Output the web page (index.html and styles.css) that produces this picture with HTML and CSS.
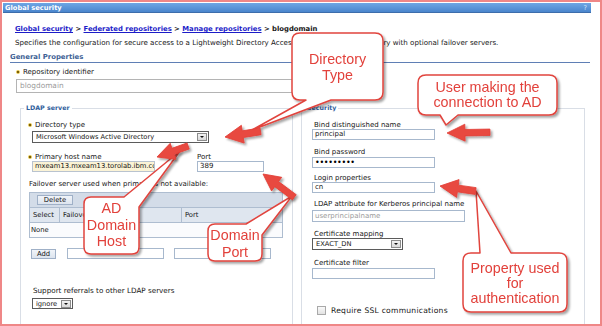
FILE: index.html
```html
<!DOCTYPE html>
<html>
<head>
<meta charset="utf-8">
<link rel="stylesheet" href="styles.css">
</head>
<body>
<div class="frame">
  <div class="titlebar"><span>Global security</span><span class="help">?</span></div>
  <div class="page">
    <div class="crumbs"><a>Global security</a> &gt; <a>Federated repositories</a> &gt; <a>Manage repositories</a> &gt; <b>blogdomain</b></div>
    <p class="desc">Specifies the configuration for secure access to a Lightweight Directory Access Protocol (LDAP) repository with optional failover servers.</p>
    <h2 class="section">General Properties</h2>
    <div class="repo">
      <div class="lbl req">Repository identifier</div>
      <div class="in repo-in grey">blogdomain</div>
    </div>
    <div class="groups">
      <fieldset class="group ldap">
        <legend>LDAP server</legend>
        <div class="lbl req dir-lbl">Directory type</div>
        <div class="sel dir-sel"><span>Microsoft Windows Active Directory</span><span class="dd"></span></div>
        <div class="host-row">
          <div class="host-col">
            <div class="lbl req">Primary host name</div>
            <div class="in host-in">mxeam13.mxeam13.torolab.ibm.com</div>
          </div>
          <div class="port-col">
            <div class="lbl">Port</div>
            <div class="in port-in">389</div>
          </div>
        </div>
        <div class="lbl plain fail-lbl">Failover server used when primary is not available:</div>
        <div class="table">
          <div class="toolbar"><span class="btn del-btn">Delete</span></div>
          <div class="trow thead"><span class="c1">Select</span><span class="c2">Failover host</span><span class="c3">Port</span></div>
          <div class="trow tbody"><span class="c-all">None</span></div>
        </div>
        <div class="add-row">
          <span class="btn add-btn">Add</span>
          <span class="in add-host"></span>
          <span class="in add-port"></span>
        </div>
        <div class="lbl plain ref-lbl">Support referrals to other LDAP servers</div>
        <div class="sel ref-sel"><span>ignore</span><span class="dd"></span></div>
      </fieldset>
      <fieldset class="group security">
        <legend>Security</legend>
        <div class="lbl sec-lbl m9">Bind distinguished name</div>
        <div class="in sec-in">principal</div>
        <div class="lbl sec-lbl m8">Bind password</div>
        <div class="in sec-in pw g1">•••••••••</div>
        <div class="lbl sec-lbl m6">Login properties</div>
        <div class="in sec-in">cn</div>
        <div class="lbl sec-lbl m7">LDAP attribute for Kerberos principal name</div>
        <div class="in krb-in grey g2">userprincipalname</div>
        <div class="lbl sec-lbl m8">Certificate mapping</div>
        <div class="sel cert-sel"><span>EXACT_DN</span><span class="dd"></span></div>
        <div class="lbl sec-lbl m9">Certificate filter</div>
        <div class="in sec-in g1"></div>
        <div class="ssl-row"><span class="chk"></span><span>Require SSL communications</span></div>
      </fieldset>
    </div>
  </div>

  <svg class="overlay" width="602" height="326" viewBox="0 0 602 326">
    <defs>
      <filter id="sh" x="-30%" y="-30%" width="160%" height="160%">
        <feDropShadow dx="2" dy="2" stdDeviation="1.3" flood-color="#000" flood-opacity="0.35"/>
      </filter>
    </defs>
    <g class="callouts" filter="url(#sh)">
      <path d="M300,33 H375 Q383,33 383,41 V92 Q383,100 375,100 H331 L252,130 L306,100 H300 Q292,100 292,92 V41 Q292,33 300,33 Z"/>
      <path d="M426,75 H549 Q557,75 557,83 V107 Q557,115 549,115 H458 L446,125 L440,115 H426 Q418,115 418,107 V83 Q418,75 426,75 Z"/>
      <path d="M91,197 H124 L180,151 L139,207 V247 Q139,254 132,254 H91 Q84,254 84,247 V204 Q84,197 91,197 Z"/>
      <path d="M215,224 H246 L292,196 L262,235 V254 Q262,261 255,261 H215 Q208,261 208,254 V231 Q208,224 215,224 Z"/>
      <path d="M471,253 H480 L476,191 L511,253 H559 Q567,253 567,261 V304 Q567,312 559,312 H471 Q463,312 463,304 V261 Q463,253 471,253 Z"/>
    </g>
    <g class="arrows" filter="url(#sh)">
      <polygon transform="translate(225,137) rotate(-9)" points="0,0 18,-9 18,-3.4 36,-3.4 36,3.4 18,3.4 18,9"/>
      <polygon transform="translate(447,133) rotate(-1)" points="0,0 18,-8.5 18,-3.2 43,-3.2 43,3.2 18,3.2 18,8.5"/>
      <polygon transform="translate(157,157) rotate(-19.5)" points="0,0 17,-8.5 17,-3.2 33,-3.2 33,3.2 17,3.2 17,8.5"/>
      <polygon transform="translate(263,174) rotate(36.6)" points="0,0 17,-8.5 17,-3.2 39,-3.2 39,3.2 17,3.2 17,8.5"/>
      <polygon transform="translate(440,186) rotate(8)" points="0,0 18,-9 18,-3.4 36,-3.4 36,3.4 18,3.4 18,9"/>
    </g>
    <g class="ctext">
      <text x="337.5" y="64">Directory</text>
      <text x="337.5" y="80">Type</text>
      <text x="487.5" y="91.5">User making the</text>
      <text x="487.5" y="106.5">connection to AD</text>
      <text x="111.5" y="213">AD</text>
      <text x="111.5" y="230">Domain</text>
      <text x="111.5" y="246">Host</text>
      <text x="235" y="240">Domain</text>
      <text x="235" y="257">Port</text>
      <text x="515" y="273">Property used</text>
      <text x="515" y="288">for</text>
      <text x="515" y="303">authentication</text>
    </g>
  </svg>
</div>
</body>
</html>
```

FILE: styles.css
```css
* { box-sizing: border-box; }
body { margin: 0; font-family: "DejaVu Sans", Verdana, sans-serif; }

.frame {
  position: relative;
  width: 602px;
  height: 326px;
  border: 2px solid #ef8787;
  background: #fff;
  overflow: hidden;
  font-size: 7px;
  color: #151515;
}

.titlebar {
  height: 10px;
  margin: 1px 9px 0 1px;
  padding: 0 4px 0 2px;
  background: linear-gradient(#6ea6e4, #4a85cd);
  border-bottom: 1px solid #3c6dab;
  display: flex;
  justify-content: space-between;
  align-items: center;
  color: #fff;
  font-weight: bold;
  font-size: 6.7px;
}
.help { color: #d6e6f8; font-size: 6.5px; font-weight: normal; }

.page { padding: 0 10px 0 9px; }

.crumbs {
  margin: 11px 0 0 4px;
  line-height: 10px;
  font-weight: bold;
  font-size: 6.85px;
  white-space: nowrap;
}
.crumbs a { color: #1c1cc8; text-decoration: underline; }

.desc { margin: 4px 0 0 4px; line-height: 10px; white-space: nowrap; font-size: 7.1px; }

.section {
  margin: 4px 0 0 -1px;
  line-height: 10px;
  font-size: 6.9px;
  font-weight: bold;
  color: #3d5f94;
  border-bottom: 1px solid #5f7fb5;
}

.lbl { line-height: 8px; white-space: nowrap; }
.req::before {
  content: "";
  display: inline-block;
  width: 4px;
  height: 4px;
  margin: 0 3px 0 0;
  border-radius: 50%;
  background: radial-gradient(circle, #7a5e08 0 25%, #e0be3e 45%, #f3e08a 100%);
  vertical-align: 0px;
}

.in {
  height: 11px;
  border: 1px solid #a7b8cd;
  background: #fff;
  padding: 0 2px;
  line-height: 9px;
  white-space: nowrap;
  overflow: hidden;
  font-size: 7px;
}
.grey { color: #9a9a9a; }

.repo { margin: 5px 0 0 5px; }
.repo-in { width: 332px; height: 14px; margin-top: 3px; line-height: 12px; border-color: #b4b4b4; padding-left: 3px; font-size: 7.4px; }

.groups { display: flex; gap: 8px; margin: 11px 0 0 9px; }

.group {
  margin: 0;
  min-width: 0;
  border: 1px solid #d9dee6;
  padding: 0 8px 11px 8px;
}
.group legend {
  padding: 0 2px;
  margin-left: -5px;
  line-height: 8px;
  font-size: 6.3px;
  font-weight: bold;
  color: #2f5e9c;
}
.ldap { width: 273px; }
.security { width: 284px; padding-left: 10px; }
.security legend { margin-left: -7px; }

.ldap .req { margin-left: -1px; }
.dir-lbl { margin-top: 9px; }

.sel {
  display: flex;
  justify-content: space-between;
  align-items: center;
  height: 12px;
  border: 1px solid #5b5b5b;
  background: #fff;
  padding: 0 1px 0 3px;
  white-space: nowrap;
  font-size: 6.7px;
}
.dd {
  position: relative;
  flex: none;
  width: 10px;
  height: 8px;
  background: linear-gradient(#f2f2f2, #d9d9d9);
  border: 1px solid #8c8c8c;
}
.dd::after {
  content: "";
  position: absolute;
  left: 2px;
  top: 2px;
  border-left: 2px solid transparent;
  border-right: 2px solid transparent;
  border-top: 2px solid #111;
}
.dir-sel { width: 177px; margin: 2px 0 0 3px; }

.host-row { display: flex; margin-top: 10px; }
.host-col { width: 168px; }
.host-in { width: 123px; margin-left: 3px; background: #fbf3d6; border-color: #b9c3cf; font-size: 6.8px; }
.port-in { width: 67px; }

.fail-lbl { margin-top: 8px; }

.table {
  margin-top: 4px;
  width: 254px;
  border: 1px solid #aebdd0;
  background: #d3dce8;
  font-size: 6.8px;
}
.toolbar { height: 14px; padding: 2px 0 0 7px; }
.btn {
  display: inline-flex;
  align-items: center;
  justify-content: center;
  height: 10px;
  background: linear-gradient(#f1f4f9, #dde4ee);
  border: 1px solid #9fb0c7;
  font-size: 6.8px;
}
.del-btn { width: 36px; }
.trow { display: flex; height: 15px; align-items: center; border-top: 1px solid #aebdd0; }
.thead { background: #dfe6ef; }
.thead span { height: 100%; display: flex; align-items: center; padding-left: 3px; }
.c1 { width: 30px; border-right: 1px solid #aebdd0; }
.c2 { width: 122px; border-right: 1px solid #aebdd0; }
.c3 { flex: 1; }
.tbody { background: #fafbfd; }
.c-all { padding-left: 1px; }

.add-row { display: flex; align-items: center; margin-top: 10px; height: 11px; }
.add-btn { width: 25px; margin-left: 2px; }
.add-host { width: 97px; margin-left: 11px; }
.add-port { width: 97px; margin-left: 10px; }

.ref-lbl { margin: 28px 0 0 4px; font-size: 7.2px; }
.ref-sel { width: 41px; height: 11px; margin: 3px 0 0 3px; }

.sec-lbl { margin-left: 2px; }
.m6 { margin-top: 6px; }
.m7 { margin-top: 7px; }
.m8 { margin-top: 8px; }
.m9 { margin-top: 9px; }
.g1 { margin-top: 1px; }
.g2 { margin-top: 2px; }
.sec-in { width: 123px; }
.pw { font-size: 8px; letter-spacing: -0.3px; color: #000; line-height: 9px; }
.krb-in { width: 153px; height: 12px; line-height: 10px; }
.cert-sel { width: 91px; }

.ssl-row { display: flex; align-items: center; gap: 5px; margin: 27px 0 0 5px; font-size: 7.6px; letter-spacing: 0.25px; }
.chk {
  width: 9px;
  height: 9px;
  border: 1px solid #a9a9a9;
  background: linear-gradient(#fafafa, #e2e2e2);
}

.overlay { position: absolute; left: -2px; top: -2px; }
.callouts path { fill: #fff; stroke: #e1443e; stroke-width: 1.5; stroke-linejoin: round; }
.arrows polygon { fill: #e8483f; stroke: #e34038; stroke-width: 0.8; stroke-linejoin: round; }
.ctext text {
  font-family: "Liberation Sans", Arial, sans-serif;
  font-size: 14.3px;
  fill: #e2413b;
  text-anchor: middle;
}
```
